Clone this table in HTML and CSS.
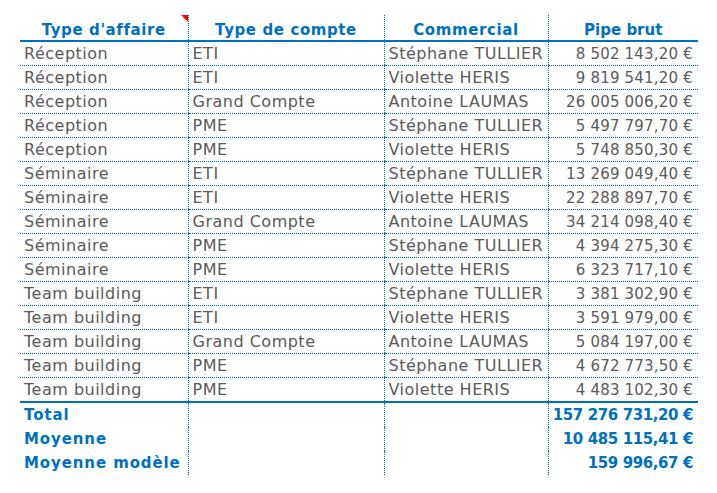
FILE: index.html
```html
<!DOCTYPE html>
<html lang="fr">
<head>
<meta charset="utf-8">
<link rel="stylesheet" href="styles.css">
</head>
<body>
<table class="sheet">
  <colgroup>
    <col class="c1"><col class="c2"><col class="c3"><col class="c4">
  </colgroup>
  <thead>
    <tr>
      <th class="flag">Type d'affaire<span class="note"></span></th>
      <th>Type de compte</th>
      <th>Commercial</th>
      <th class="pipe">Pipe brut</th>
    </tr>
  </thead>
  <tbody>
    <tr><td>Réception</td><td>ETI</td><td>Stéphane TULLIER</td><td class="num">8 502 143,20 €</td></tr>
    <tr><td>Réception</td><td>ETI</td><td>Violette HERIS</td><td class="num">9 819 541,20 €</td></tr>
    <tr><td>Réception</td><td>Grand Compte</td><td>Antoine LAUMAS</td><td class="num">26 005 006,20 €</td></tr>
    <tr><td>Réception</td><td>PME</td><td>Stéphane TULLIER</td><td class="num">5 497 797,70 €</td></tr>
    <tr><td>Réception</td><td>PME</td><td>Violette HERIS</td><td class="num">5 748 850,30 €</td></tr>
    <tr><td>Séminaire</td><td>ETI</td><td>Stéphane TULLIER</td><td class="num">13 269 049,40 €</td></tr>
    <tr><td>Séminaire</td><td>ETI</td><td>Violette HERIS</td><td class="num">22 288 897,70 €</td></tr>
    <tr><td>Séminaire</td><td>Grand Compte</td><td>Antoine LAUMAS</td><td class="num">34 214 098,40 €</td></tr>
    <tr><td>Séminaire</td><td>PME</td><td>Stéphane TULLIER</td><td class="num">4 394 275,30 €</td></tr>
    <tr><td>Séminaire</td><td>PME</td><td>Violette HERIS</td><td class="num">6 323 717,10 €</td></tr>
    <tr><td>Team building</td><td>ETI</td><td>Stéphane TULLIER</td><td class="num">3 381 302,90 €</td></tr>
    <tr><td>Team building</td><td>ETI</td><td>Violette HERIS</td><td class="num">3 591 979,00 €</td></tr>
    <tr><td>Team building</td><td>Grand Compte</td><td>Antoine LAUMAS</td><td class="num">5 084 197,00 €</td></tr>
    <tr><td>Team building</td><td>PME</td><td>Stéphane TULLIER</td><td class="num">4 672 773,50 €</td></tr>
    <tr class="last"><td>Team building</td><td>PME</td><td>Violette HERIS</td><td class="num">4 483 102,30 €</td></tr>
  </tbody>
  <tfoot>
    <tr class="first"><td>Total</td><td></td><td></td><td class="num">157 276 731,20 €</td></tr>
    <tr><td>Moyenne</td><td></td><td></td><td class="num">10 485 115,41 €</td></tr>
    <tr><td>Moyenne modèle</td><td></td><td></td><td class="num">159 996,67 €</td></tr>
  </tfoot>
</table>
</body>
</html>
```
FILE: styles.css
```css
html, body {
  margin: 0;
  padding: 0;
  background: #ffffff;
}

.sheet {
  margin: 15px 0 0 20px;
  width: 678px;
  border-collapse: collapse;
  table-layout: fixed;
  font-family: "DejaVu Sans", sans-serif;
  font-size: 16px;
}

.c1 { width: 168px; }
.c2 { width: 196px; }
.c3 { width: 164px; }
.c4 { width: 150px; }

.sheet th,
.sheet td {
  padding: 0 4px;
  white-space: nowrap;
  overflow: hidden;
  border-left: 1px dotted #0070c0;
}

.sheet th:first-child,
.sheet td:first-child {
  border-left: none;
}

.sheet th {
  height: 24px;
  color: #0070c0;
  font-size: 15px;
  font-weight: bold;
  letter-spacing: 0.6px;
  text-align: center;
  border-bottom: 2px solid #0070c0;
  vertical-align: bottom;
  padding-bottom: 1px;
}

.sheet th.pipe {
  letter-spacing: 0;
}

.sheet th.flag {
  position: relative;
}

.note {
  position: absolute;
  right: 0;
  top: 0;
  width: 0;
  height: 0;
  border-top: 7px solid #ff0000;
  border-left: 7px solid transparent;
}

.sheet tbody td {
  height: 23px;
  color: #5a5a5a;
  letter-spacing: 0.5px;
  border-bottom: 1px dotted #0070c0;
}

.sheet tbody tr.last td {
  border-bottom: 2px solid #0070c0;
}

.sheet tfoot td {
  height: 24px;
  color: #0070c0;
  font-size: 15px;
  font-weight: bold;
  letter-spacing: 0.9px;
}

.sheet .num {
  text-align: right;
  padding-right: 5px;
  overflow: visible;
}

.sheet tbody .num {
  font-size: 15px;
  letter-spacing: 0.2px;
}

.sheet tfoot .num {
  letter-spacing: -0.4px;
}
```
